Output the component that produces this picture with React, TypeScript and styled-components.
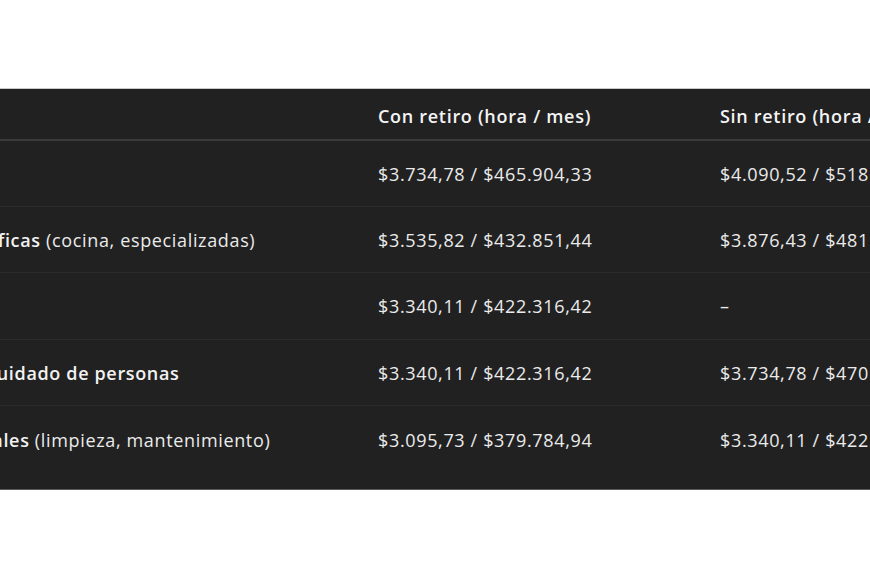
import React from "react";
import styled, { createGlobalStyle } from "styled-components";

const Global = createGlobalStyle`
  html, body { margin: 0; padding: 0; background: #ffffff; overflow: hidden; }
  body { font-family: "Open Sans", "Noto Sans", sans-serif; }
`;

const Page = styled.div`
  width: 870px;
  height: 580px;
  padding-top: 88px;
  box-sizing: border-box;
  overflow: hidden;
  background: #ffffff;
`;

const Panel = styled.div`
  background: #212121;
  border-top: 1px solid #c9c9c9;
  border-bottom: 1px solid #5a5a5a;
  padding-bottom: 17px;
  overflow: hidden;
`;

const Table = styled.table`
  margin-left: -144px;
  width: 1190px;
  border-collapse: collapse;
  table-layout: fixed;
  color: #ebebeb;
  font-size: 18px;
  letter-spacing: 0.65px;
`;

const Col = styled.col<{ $w: number }>`
  width: ${(p) => p.$w}px;
`;

const HeadCell = styled.th`
  height: 51px;
  padding: 4px 16px 0;
  box-sizing: border-box;
  text-align: left;
  font-weight: 600;
  letter-spacing: 0.7px;
  color: #f4f4f4;
  border-bottom: 2px solid #3a3a3a;
  white-space: nowrap;
  vertical-align: middle;
`;

const Row = styled.tr`
  height: 66.4px;
  border-bottom: 1px solid #2b2b2b;
  &:last-child { border-bottom: none; }
`;

const Cell = styled.td`
  padding: 1px 16px 0;
  white-space: nowrap;
  vertical-align: middle;
`;

const Strong = styled.strong`
  font-weight: 600;
  color: #f2f2f2;
`;

type RowData = { label: string; note?: string; con: string; sin: string };

const rows: RowData[] = [
  { label: "Supervisor/a", con: "$3.734,78 / $465.904,33", sin: "$4.090,52 / $518.519,04" },
  { label: "Tareas específicas", note: "(cocina, especializadas)", con: "$3.535,82 / $432.851,44", sin: "$3.876,43 / $481.708,95" },
  { label: "Caseros", con: "$3.340,11 / $422.316,42", sin: "–" },
  { label: "Asistencia y cuidado de personas", con: "$3.340,11 / $422.316,42", sin: "$3.734,78 / $470.812,98" },
  { label: "Tareas generales", note: "(limpieza, mantenimiento)", con: "$3.095,73 / $379.784,94", sin: "$3.340,11 / $422.316,42" },
];

export default function App() {
  return (
    <>
      <Global />
      <Page>
        <Panel>
          <Table>
            <colgroup>
              <Col $w={506} />
              <Col $w={342} />
              <Col $w={342} />
            </colgroup>
            <thead>
              <tr>
                <HeadCell>Categoría</HeadCell>
                <HeadCell>Con retiro (hora / mes)</HeadCell>
                <HeadCell>Sin retiro (hora / mes)</HeadCell>
              </tr>
            </thead>
            <tbody>
              {rows.map((r) => (
                <Row key={r.label}>
                  <Cell>
                    <Strong>{r.label}</Strong>
                    {r.note ? ` ${r.note}` : ""}
                  </Cell>
                  <Cell>{r.con}</Cell>
                  <Cell>{r.sin}</Cell>
                </Row>
              ))}
            </tbody>
          </Table>
        </Panel>
      </Page>
    </>
  );
}
